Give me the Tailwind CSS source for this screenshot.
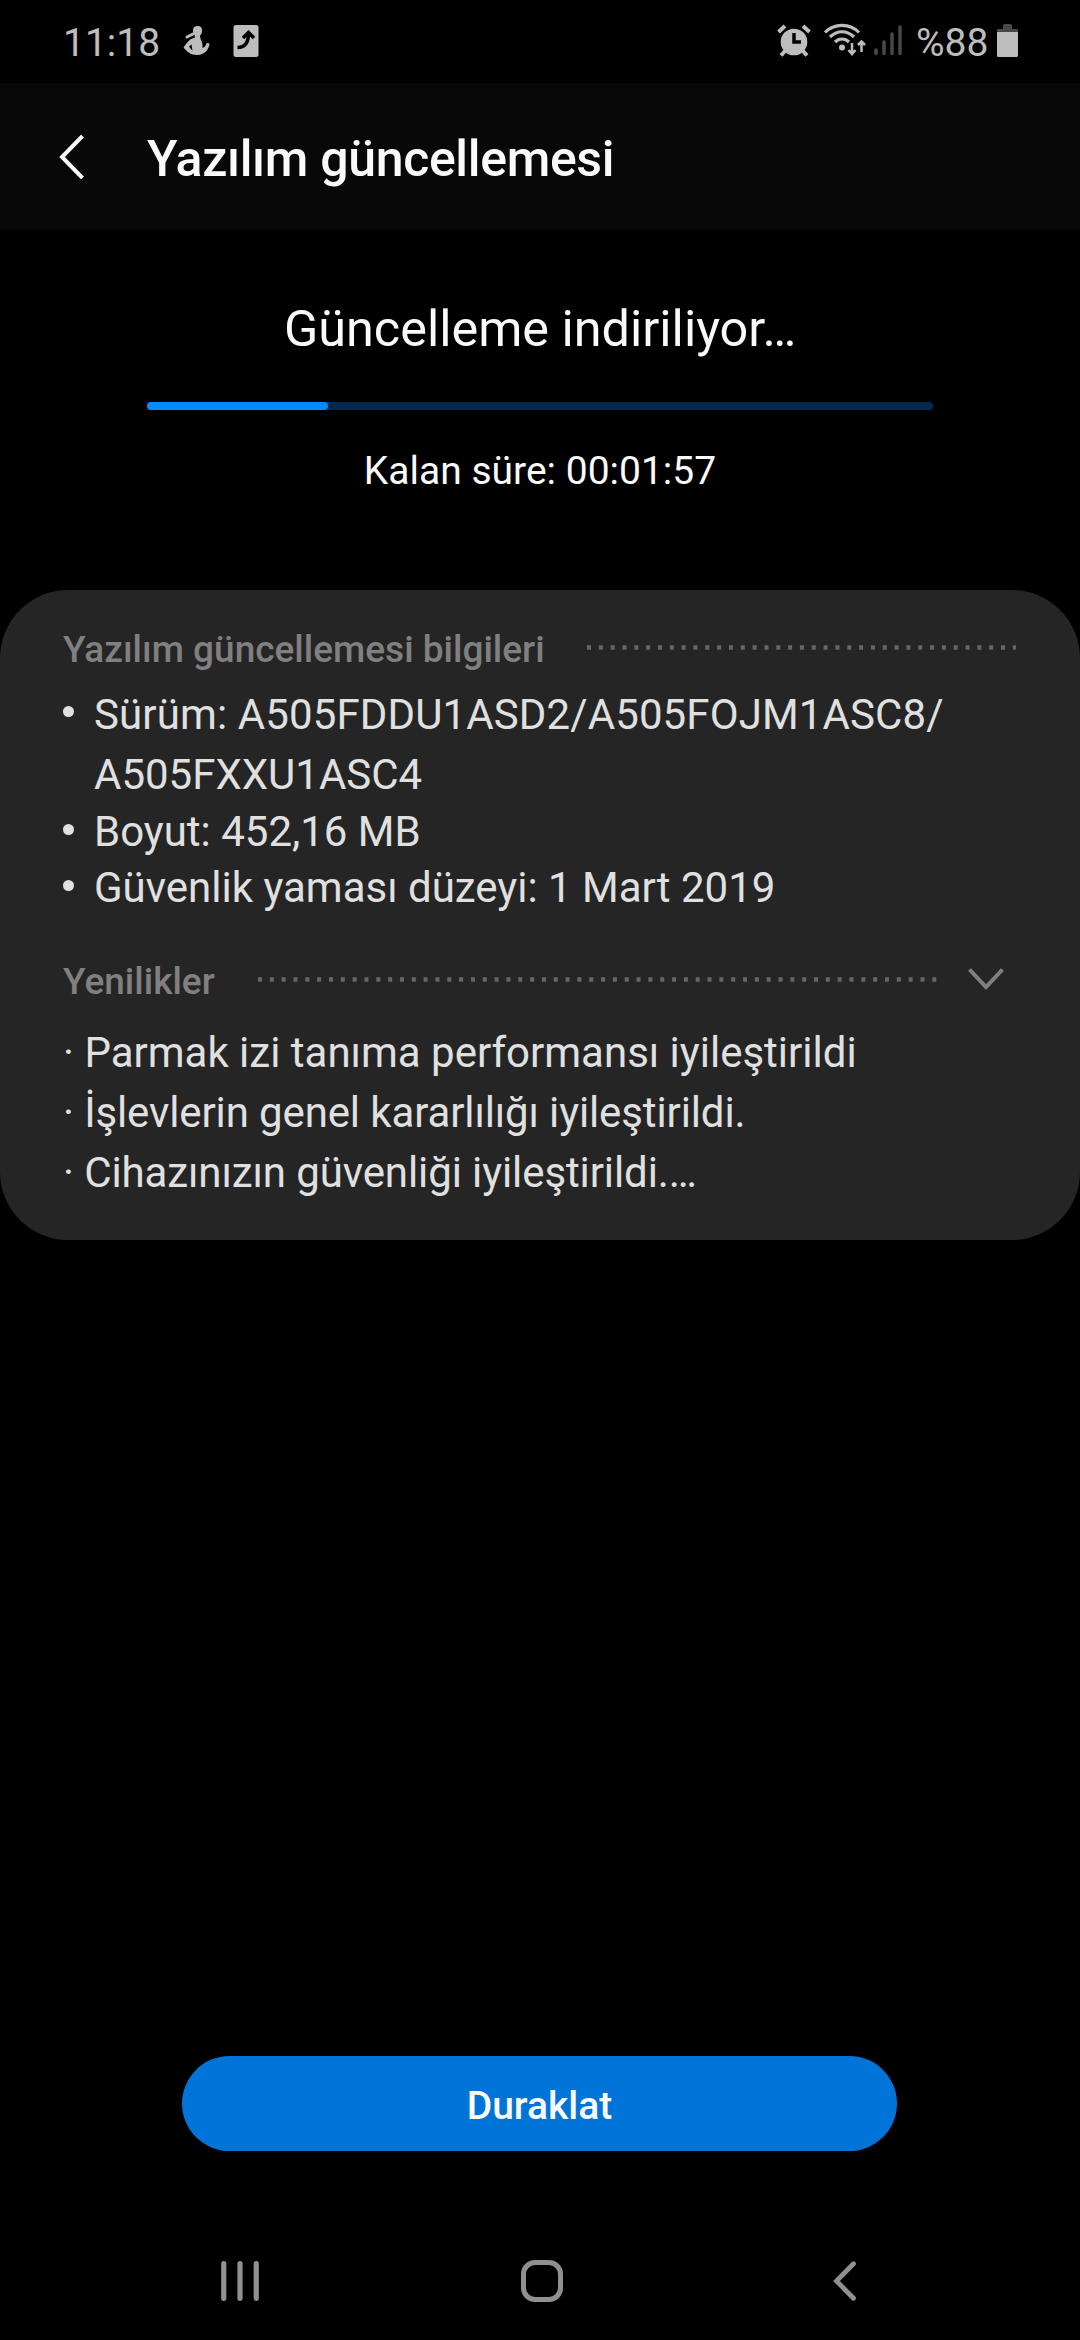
<!DOCTYPE html>
<html lang="tr">
  <head>
    <meta charset="UTF-8" />
    <meta name="viewport" content="width=device-width, initial-scale=1.0" />
    <title>Yazılım güncellemesi</title>
    <script src="https://cdn.jsdelivr.net/npm/@tailwindcss/browser@4"></script>
  </head>
  <body class="bg-black font-[Roboto,sans-serif] text-[#fafafa]">
    <div class="w-[1080px] h-[2340px] flex flex-col overflow-hidden">
      <!-- status bar -->
      <div class="h-[83px] shrink-0 flex items-start text-[#bdbdbd] pl-[63px]">
        <span class="w-[118px] text-[39px] leading-[46px] pt-[20px]">11:18</span>
        <svg class="w-[30px] h-[34px] mt-[24px] ml-[1px]" viewBox="0 0 30 34">
          <path d="M11 6C11 3.500 13 2 15.500 2C18.500 2 20.500 4 20 7C20 9 19 10.500 18 11.500L18.500 15C20.500 18 20.500 21 20.500 24C23 23 24 21.500 24.500 19L27.500 19.500C27 26 22 31 15.500 31C8 31 5 27.500 1.500 23.500C4 20 6 17 9 15L13 13.500L12.500 11C11 10 11 8 11 6Z" fill="currentColor" />
          <path d="M5 13L11 10" stroke="currentColor" stroke-width="3" stroke-linecap="round" />
          <path d="M7 22.500L9.500 20.500L10.500 27Z" fill="#000" />
        </svg>
        <svg class="w-[26px] h-[33px] mt-[24px] ml-[21px]" viewBox="0 0 26 33">
          <rect x="0.500" y="1" width="25" height="32" rx="2.500" fill="currentColor" />
          <path d="M4.500 23.500C11 23.500 15.500 20 15.500 9.500M10 14L15.500 8.500L21 14" fill="none" stroke="#000" stroke-width="3.500" />
        </svg>
        <svg class="w-[34px] h-[34px] mt-[24px] ml-[518px]" viewBox="0 0 34 34">
          <circle cx="17" cy="18" r="13.300" fill="currentColor" />
          <path d="M1.500 8L8 2M26 2L32.500 8M8 27L4 31.500M26 27L30 31.500" stroke="currentColor" stroke-width="4" />
          <path d="M17 9V18H24" fill="none" stroke="#000" stroke-width="3.500" />
        </svg>
        <svg class="w-[44px] h-[34px] mt-[23px] ml-[12px]" viewBox="0 0 44 34">
          <path d="M2 9.500C11 0 27 0 36 9.500M7 14C14 7 24 7 31 14M12 19C16 15 22 15 26 19" fill="none" stroke="currentColor" stroke-width="3.200" />
          <circle cx="19" cy="24.500" r="3" fill="currentColor" />
          <path d="M29 20V30M25.500 27L29 31L32.500 27M38.500 29V19M35 22L38.500 18.500L42 22" fill="none" stroke="currentColor" stroke-width="2.500" />
        </svg>
        <svg class="w-[28px] h-[31px] mt-[25px] ml-[7px]" viewBox="0 0 28 31">
          <path d="M2 25V28.500M10 17V28.500M18 9V28.500M26 2V28.500" stroke="#484848" stroke-width="3.500" stroke-linecap="round" />
        </svg>
        <span class="ml-[14px] w-[80px] text-[39px] leading-[46px] pt-[20px]">%88</span>
        <svg class="w-[21px] h-[33px] mt-[24px] ml-[1px]" viewBox="0 0 21 33">
          <path d="M6 5V1.500Q6 0 7.500 0H13.500Q15 0 15 1.500V5H20Q21 5 21 6V9H0V6Q0 5 1 5Z" fill="#484848" />
          <path d="M0 8H21V31.500Q21 33 19.500 33H1.500Q0 33 0 31.500Z" fill="currentColor" />
        </svg>
      </div>

      <!-- toolbar -->
      <div class="h-[147px] shrink-0 bg-[#080808] flex items-center pl-[58px]">
        <svg class="w-[28px] h-[44px]" viewBox="0 0 28 44" fill="none" stroke="#fafafa" stroke-width="4">
          <path d="M24.500 1L4 22L24.500 43" />
        </svg>
        <h1 class="ml-[61px] pt-[4px] text-[50px] leading-[60px] tracking-[-0.33px] font-medium">Yazılım güncellemesi</h1>
      </div>

      <!-- progress -->
      <div class="h-[360px] shrink-0 flex flex-col items-center pt-[69px]">
        <p class="text-[50.4px] leading-[60px]">Güncelleme indiriliyor…</p>
        <div class="mt-[43px] w-[786px] h-[8px] rounded-full bg-[#002a4d]">
          <div class="h-full rounded-full bg-[#008bff]" style="width: 23%"></div>
        </div>
        <p class="mt-[38px] text-[39px] leading-[46px]">Kalan süre: 00:01:57</p>
      </div>

      <!-- update info -->
      <div class="h-[650px] shrink-0 rounded-[68px] bg-[#252525] px-[63px] pt-[38px] text-[#e0e0e0] text-[42px]">
        <div class="flex items-center">
          <h2 class="text-[37px] leading-[44px] font-medium text-[#808080]">Yazılım güncellemesi bilgileri</h2>
          <svg class="ml-auto mr-[1px] mb-[5px] w-[429px] h-[5px]">
            <path d="M0 2.500H430" stroke="#666" stroke-width="4.500" stroke-dasharray="4 7.830" />
          </svg>
        </div>
        <ul class="mt-[13px]">
          <li class="flex gap-[20px] leading-[60px]">
            <span class="mt-[21px] size-[11px] shrink-0 rounded-full bg-[#e0e0e0]"></span>
            <span><span class="tracking-[0.12px]">Sürüm: A505FDDU1ASD2/A505FOJM1ASC8/</span><br />A505FXXU1ASC4</span>
          </li>
          <li class="flex gap-[20px] leading-[57px]">
            <span class="mt-[19px] size-[11px] shrink-0 rounded-full bg-[#e0e0e0]"></span>
            <span class="-mt-[2px]">Boyut: 452,16 MB</span>
          </li>
          <li class="flex gap-[20px] leading-[57px]">
            <span class="mt-[20px] size-[11px] shrink-0 rounded-full bg-[#e0e0e0]"></span>
            <span class="-mt-px">Güvenlik yaması düzeyi: 1 Mart 2019</span>
          </li>
        </ul>
        <div class="mt-[44px] flex items-center">
          <h2 class="text-[37px] leading-[44px] font-medium text-[#808080]">Yenilikler</h2>
          <svg class="ml-auto mb-[6px] w-[679px] h-[5px]">
            <path d="M0 2.500H679" stroke="#666" stroke-width="4.500" stroke-dasharray="4 7.830" />
          </svg>
          <svg class="ml-[31px] mr-[13px] mb-[6px] w-[36px] h-[22px]" viewBox="0 0 36 22" fill="none" stroke="#808080" stroke-width="4">
            <path d="M1.500 1.500L18 19L34.500 1.500" />
          </svg>
        </div>
        <div class="mt-[19px] leading-[60px]">
          <p>· Parmak izi tanıma performansı iyileştirildi</p>
          <p class="tracking-[-0.12px]">· İşlevlerin genel kararlılığı iyileştirildi.</p>
          <p class="tracking-[-0.1px]">· Cihazınızın güvenliği iyileştirildi.…</p>
        </div>
      </div>

      <button class="mt-auto ml-[182px] w-[715px] h-[95px] shrink-0 rounded-full bg-[#0074d8] pt-[5px] text-[39px] font-medium">Duraklat</button>

      <!-- navigation bar -->
      <div class="mt-[63px] h-[126px] shrink-0 flex items-center pt-[8px] text-[#909090]">
        <svg class="ml-[221px] w-[38px] h-[40px]" viewBox="0 0 38 40">
          <path d="M2.750 2.700V37.300M19 2.700V37.300M35.250 2.700V37.300" stroke="currentColor" stroke-width="5.200" stroke-linecap="round" />
        </svg>
        <div class="ml-[262px] size-[42px] rounded-[14px] border-[5px] border-current"></div>
        <svg class="ml-[270px] w-[24px] h-[40px]" viewBox="0 0 24 40" fill="none" stroke="currentColor" stroke-width="4.800" stroke-linecap="round">
          <path d="M20.500 2.700L3.500 20L20.500 37.300" />
        </svg>
      </div>
    </div>
  </body>
</html>
